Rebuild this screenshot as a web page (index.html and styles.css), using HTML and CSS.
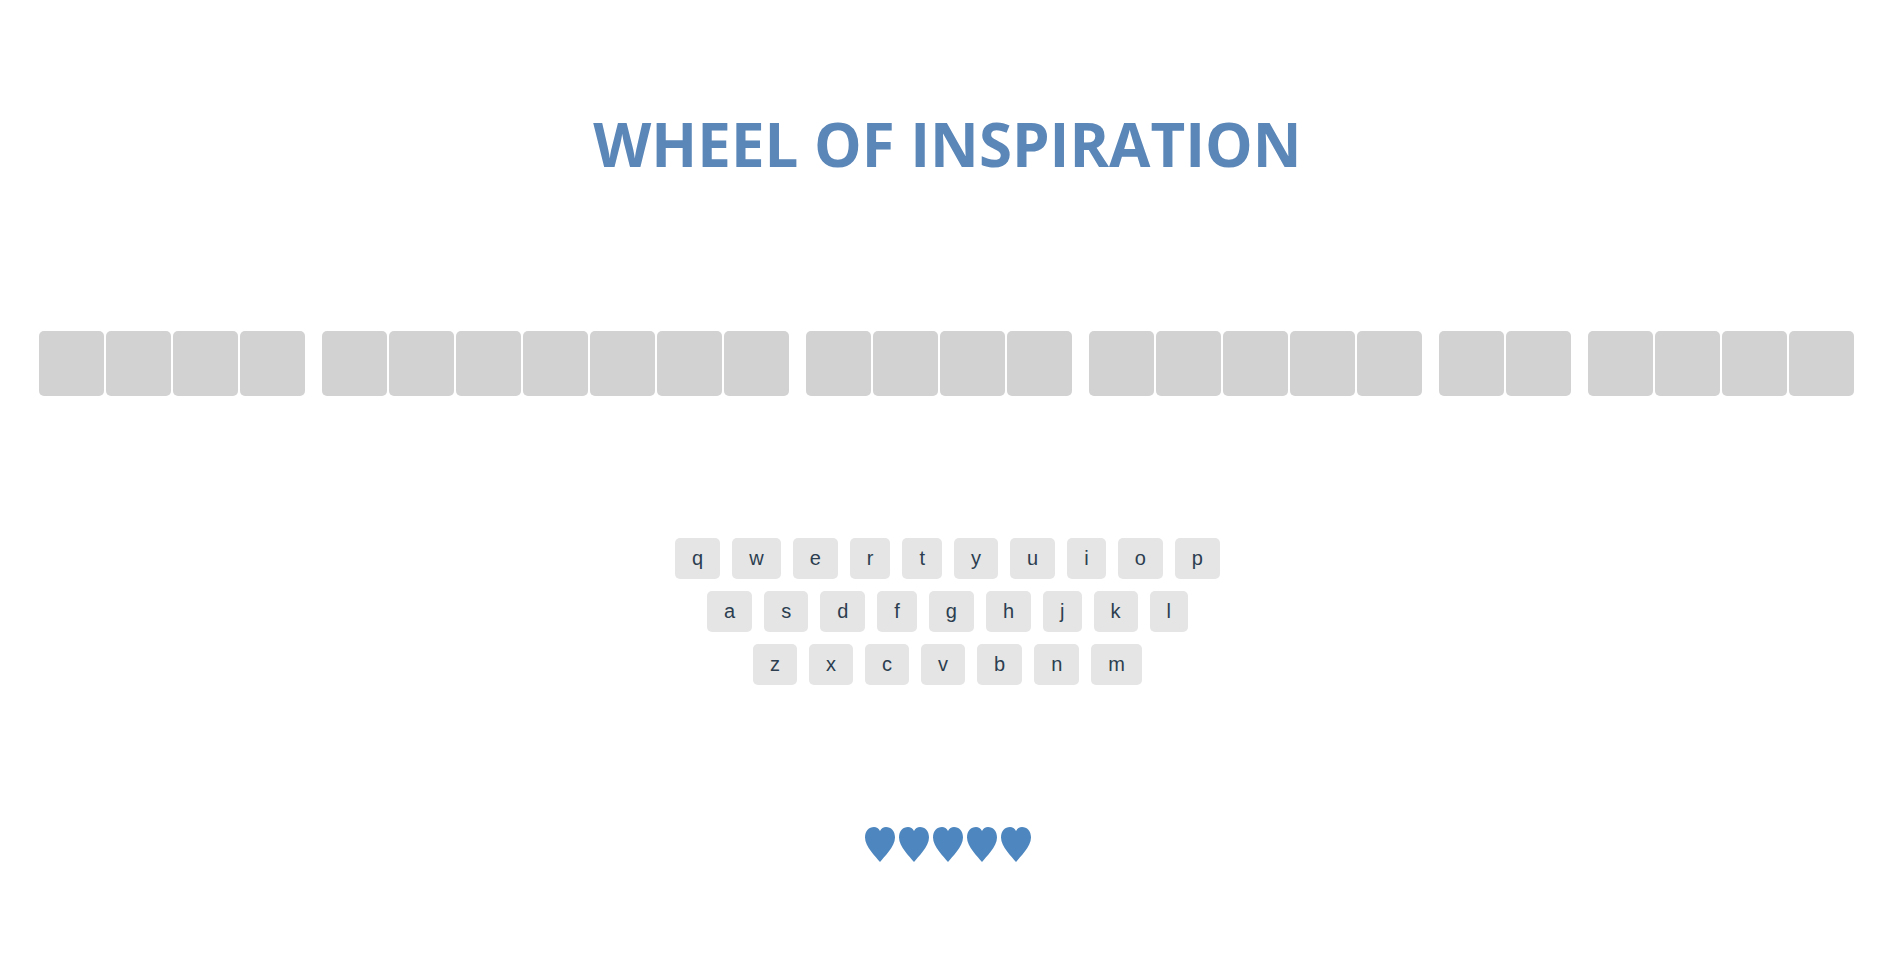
FILE: index.html
```html
<!DOCTYPE html>
<html lang="en">
<head>
<meta charset="utf-8">
<meta name="viewport" content="width=device-width, initial-scale=1">
<title>Wheel of Inspiration</title>
<link rel="stylesheet" href="styles.css">
</head>
<body>
<main class="game">
  <h1 class="title">WHEEL OF INSPIRATION</h1>
  <section class="phrase" aria-label="Phrase">
    <div class="word"><span class="tile"></span><span class="tile"></span><span class="tile"></span><span class="tile"></span></div>
    <div class="word"><span class="tile"></span><span class="tile"></span><span class="tile"></span><span class="tile"></span><span class="tile"></span><span class="tile"></span><span class="tile"></span></div>
    <div class="word"><span class="tile"></span><span class="tile"></span><span class="tile"></span><span class="tile"></span></div>
    <div class="word"><span class="tile"></span><span class="tile"></span><span class="tile"></span><span class="tile"></span><span class="tile"></span></div>
    <div class="word"><span class="tile"></span><span class="tile"></span></div>
    <div class="word"><span class="tile"></span><span class="tile"></span><span class="tile"></span><span class="tile"></span></div>
  </section>
  <section class="keyboard" aria-label="Keyboard">
    <div class="keyrow"><button class="key">q</button><button class="key">w</button><button class="key">e</button><button class="key">r</button><button class="key">t</button><button class="key">y</button><button class="key">u</button><button class="key">i</button><button class="key">o</button><button class="key">p</button></div>
    <div class="keyrow"><button class="key">a</button><button class="key">s</button><button class="key">d</button><button class="key">f</button><button class="key">g</button><button class="key">h</button><button class="key">j</button><button class="key">k</button><button class="key">l</button></div>
    <div class="keyrow"><button class="key">z</button><button class="key">x</button><button class="key">c</button><button class="key">v</button><button class="key">b</button><button class="key">n</button><button class="key">m</button></div>
  </section>
  <svg width="0" height="0" class="defs" aria-hidden="true"><symbol id="heart" viewBox="0 0 30 35"><path d="M15 35C11 30 0 19.500 0 10.500C0 4 4 0 9 0C11.500 0 13.800 1.500 15 4C16.200 1.500 18.500 0 21 0C26 0 30 4 30 10.500C30 19.500 19 30 15 35Z"/></symbol></svg>
  <section class="lives" aria-label="Lives">
    <svg class="heart"><use href="#heart"/></svg>
    <svg class="heart"><use href="#heart"/></svg>
    <svg class="heart"><use href="#heart"/></svg>
    <svg class="heart"><use href="#heart"/></svg>
    <svg class="heart"><use href="#heart"/></svg>
  </section>
</main>
</body>
</html>
```

FILE: styles.css
```css
body {
  margin: 0;
  background: #ffffff;
  color: #2c3e50;
  font-family: "Liberation Sans", Arial, sans-serif;
}
.game {
  display: flex;
  flex-direction: column;
  align-items: center;
  padding: 103px 0 96px;
}
.title {
  margin: 0 0 146px;
  padding-left: 6px;
  color: #5b86b8;
  font: 700 60px/82px "Open Sans", sans-serif;
  text-align: center;
}
.phrase {
  display: flex;
  flex-wrap: wrap;
  justify-content: center;
  gap: 17px;
  padding-left: 4px;
  margin-bottom: 142px;
}
.word {
  display: flex;
  gap: 2px;
}
.tile {
  width: 65px;
  height: 65px;
  border-radius: 5px;
  background: #d2d2d2;
}
.keyboard {
  display: flex;
  flex-direction: column;
  gap: 12px;
  padding-left: 6px;
  margin-bottom: 142px;
}
.keyrow {
  display: flex;
  justify-content: center;
  gap: 12px;
}
.key {
  padding: 9px 17px;
  border: 0;
  border-radius: 5px;
  background: #e5e5e5;
  color: #2c3e50;
  font: 20px/23px "Liberation Sans", Arial, sans-serif;
  cursor: pointer;
}
.defs {
  display: block;
}
.lives {
  display: flex;
  gap: 4px;
  padding-left: 7px;
}
.heart {
  width: 30px;
  height: 35px;
  fill: #4e87bf;
}
```
